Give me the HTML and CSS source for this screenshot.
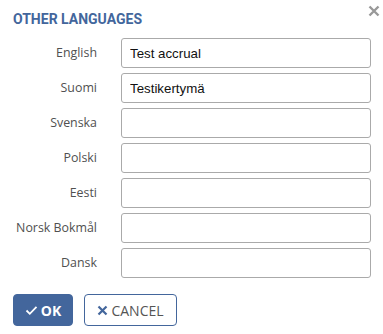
FILE: index.html
```html
<!DOCTYPE html>
<html lang="en">
  <head>
    <meta charset="UTF-8" />
    <title>Other languages</title>
    <link rel="stylesheet" href="styles.css">
  </head>
  <body>
    <div class="dialog">
      <div class="dialog-header">
        <h2 class="dialog-title">OTHER LANGUAGES</h2>
        <button class="close-btn" type="button" aria-label="Close">
          <svg width="12" height="12" viewBox="0 0 12 12">
            <path d="M1.5 1.5 L10.5 10.5 M10.5 1.5 L1.5 10.5" stroke="#999" stroke-width="2.4" />
          </svg>
        </button>
      </div>

      <form class="lang-form">
        <label class="lang-label" for="en">English</label>
        <input class="lang-input" id="en" type="text" value="Test accrual" />

        <label class="lang-label" for="fi">Suomi</label>
        <input class="lang-input" id="fi" type="text" value="Testikertymä" />

        <label class="lang-label" for="sv">Svenska</label>
        <input class="lang-input" id="sv" type="text" />

        <label class="lang-label" for="pl">Polski</label>
        <input class="lang-input" id="pl" type="text" />

        <label class="lang-label" for="et">Eesti</label>
        <input class="lang-input" id="et" type="text" />

        <label class="lang-label" for="nb">Norsk Bokmål</label>
        <input class="lang-input" id="nb" type="text" />

        <label class="lang-label" for="da">Dansk</label>
        <input class="lang-input" id="da" type="text" />
      </form>

      <div class="dialog-actions">
        <button class="btn btn-primary" type="button">
          <svg width="13" height="11" viewBox="0 0 13 11">
            <path d="M1.5 5.5 L4.8 8.8 L11.5 1.8" fill="none" stroke="#fff" stroke-width="1.8" />
          </svg>
          OK
        </button>
        <button class="btn btn-outline" type="button">
          <svg width="11" height="11" viewBox="0 0 11 11">
            <path d="M1.5 1.5 L9.5 9.5 M9.5 1.5 L1.5 9.5" stroke="#43669c" stroke-width="2.2" />
          </svg>
          CANCEL
        </button>
      </div>
    </div>
  </body>
</html>
```

FILE: styles.css
```css
*,
*::after,
*::before {
  margin: 0;
  padding: 0;
  box-sizing: border-box;
}

html {
  font-family: "Open Sans", "Liberation Sans", sans-serif;
}

body {
  background: #fff;
}

.dialog {
  width: 383px;
  padding: 0 12px 0 13px;
}

.dialog-header {
  display: flex;
  justify-content: space-between;
  align-items: flex-start;
  height: 38px;
}

.dialog-title {
  font-family: Roboto, "Open Sans", sans-serif;
  font-size: 14px;
  font-weight: 700;
  color: #43669c;
  padding-top: 10px;
  line-height: 18px;
}

.close-btn {
  border: 0;
  background: none;
  cursor: pointer;
  margin-top: 5px;
  margin-right: -9px;
  width: 12px;
  height: 12px;
  display: block;
}

.close-btn svg {
  display: block;
}

.lang-form {
  display: grid;
  grid-template-columns: 84px 250px;
  column-gap: 24px;
  row-gap: 5px;
  align-items: center;
}

.lang-label {
  justify-self: end;
  white-space: nowrap;
  font-size: 12.4px;
  line-height: 18px;
  color: #505050;
}

.lang-input {
  height: 30px;
  border: 1px solid #aaa;
  border-radius: 3px;
  padding: 0 8px;
  font-family: "Liberation Sans", Arial, sans-serif;
  font-size: 13.3px;
  color: #111;
  outline: none;
}

.dialog-actions {
  display: flex;
  gap: 11px;
  margin-top: 16px;
}

.btn {
  font-family: inherit;
  font-size: 14px;
  height: 32px;
  border-radius: 4px;
  display: flex;
  align-items: center;
  justify-content: center;
  gap: 3px;
  cursor: pointer;
}

.btn-primary {
  width: 60px;
  background: #43669c;
  border: 1px solid #43669c;
  color: #fff;
  font-weight: 700;
}

.btn-outline {
  width: 93px;
  background: #fff;
  border: 1px solid #43669c;
  color: #555;
}
```
